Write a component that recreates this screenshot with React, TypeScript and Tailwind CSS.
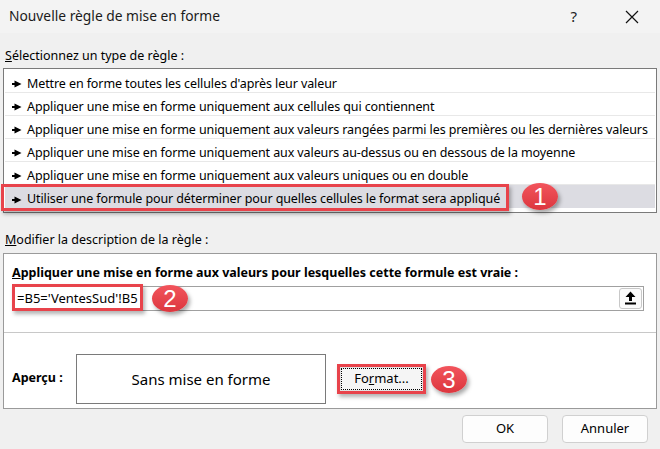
import React from "react";

const font = { fontFamily: '"Noto Sans", "Open Sans", Arial, sans-serif' };

function Pointer() {
  return (
    <svg width="10" height="8" viewBox="0 0 10 8" className="shrink-0">
      <rect x="0" y="3" width="4" height="2" fill="#000" />
      <polygon points="2.5,0.5 9.5,4 2.5,7.5" fill="#000" />
    </svg>
  );
}

function Badge({ n, className }: { n: string; className: string }) {
  return (
    <div
      className={`absolute w-[36px] h-[27px] rounded-[50%] bg-gradient-to-b from-[#f2545c] to-[#dc363e] shadow-[2px_3px_4px_rgba(0,0,0,0.35)] flex items-center justify-center text-white text-[24px] leading-none ${className}`}
      style={{ fontFamily: '"Liberation Sans", Arial, sans-serif' }}
    >
      {n}
    </div>
  );
}

const rules = [
  "Mettre en forme toutes les cellules d'après leur valeur",
  "Appliquer une mise en forme uniquement aux cellules qui contiennent",
  "Appliquer une mise en forme uniquement aux valeurs rangées parmi les premières ou les dernières valeurs",
  "Appliquer une mise en forme uniquement aux valeurs au-dessus ou en dessous de la moyenne",
  "Appliquer une mise en forme uniquement aux valeurs uniques ou en double",
  "Utiliser une formule pour déterminer pour quelles cellules le format sera appliqué",
];

export default function App() {
  return (
    <div className="w-[660px] h-[449px] bg-[#f0f0f0] text-[#000] overflow-hidden relative" style={font}>
      {/* title bar */}
      <div className="h-[33px] bg-[#f3f3f3] flex items-center pl-[9px]">
        <span className="text-[13.8px] text-[#1a1a1a]">Nouvelle règle de mise en forme</span>
        <span className="ml-auto text-[15px] text-[#222] mr-[48px]">?</span>
        <svg width="14" height="14" viewBox="0 0 14 14" className="mr-[21px]">
          <path d="M1 1 L13 13 M13 1 L1 13" stroke="#111" strokeWidth="1.2" />
        </svg>
      </div>

      <div className="px-[3px]">
        <div className="h-[35px] flex items-end pb-[2px] pl-[2px] text-[12.5px]">
          <span>
            <span className="underline">S</span>électionnez un type de règle :
          </span>
        </div>

        {/* rule type list */}
        <div className="relative h-[145px] border border-[#7a7a7a] bg-white pt-[1px] px-[1px]">
          {rules.map((r, i) => {
            const sel = i === rules.length - 1;
            return (
              <div
                key={i}
                className={`h-[23px] pt-[6px] flex items-center gap-[5px] pl-[7px] whitespace-nowrap overflow-hidden text-[12.5px] tracking-[-0.1px] ${
                  sel ? "bg-[#dcdce2]" : "border-b border-[#e8e8e8]"
                }`}
              >
                <Pointer />
                <span>{r}</span>
              </div>
            );
          })}
          <div className="absolute left-[-3px] top-[115px] w-[508px] h-[27px] border-[3px] border-[#e8434b] shadow-[2px_3px_4px_rgba(0,0,0,0.3)]" />
          <Badge n="1" className="left-[518px] top-[114px]" />
        </div>

        <div className="h-[40px] flex items-end pb-[3px] pl-[2px] text-[12.5px]">
          <span>
            <span className="underline">M</span>odifier la description de la règle :
          </span>
        </div>

        {/* rule description */}
        <div className="relative h-[156px] border border-[#9a9a9a] bg-white">
          <div className="pl-[8px] pt-[10px] text-[12.5px] font-bold">
            <span className="underline">A</span>ppliquer une mise en forme aux valeurs pour lesquelles cette formule est vraie :
          </div>
          <div className="mt-[3px] ml-[8px] mr-[12px] h-[25px] border border-[#a0a0a0] flex items-center pl-[4px]">
            <span className="text-[13px]">=B5='VentesSud'!B5</span>
            <div className="ml-auto mr-[1px] w-[23px] h-[21px] border border-[#c8c8c8] rounded-[3px] flex items-center justify-center bg-[#fbfbfb]">
              <svg width="11" height="14" viewBox="0 0 11 14">
                <polygon points="5.5,0.5 10.5,6 7,6 7,10 4,10 4,6 0.5,6" fill="#000" />
                <rect x="0" y="11.5" width="11" height="2" fill="#000" />
              </svg>
            </div>
          </div>
          <div className="absolute left-[8px] top-[30px] w-[131px] h-[27px] border-[3px] border-[#e8434b] shadow-[2px_3px_4px_rgba(0,0,0,0.3)]" />
          <Badge n="2" className="left-[148px] top-[31px]" />

          <div className="mt-[21px] border-t border-[#c8c8c8]" />

          <div className="flex items-center mt-[21px] pl-[8px]">
            <span className="w-[64px] text-[12.5px] font-bold">Aperçu :</span>
            <div className="w-[250px] h-[50px] border border-[#7a7a7a] flex items-center justify-center text-[15px]">
              Sans mise en forme
            </div>
            <div className="ml-[11px] w-[89px] h-[30px] border-[3px] border-[#e8434b] shadow-[2px_3px_4px_rgba(0,0,0,0.3)] bg-[#e1e1e1] p-[1px]">
              <div className="w-full h-full border border-dotted border-[#000] bg-[#f5f5f5] flex items-center justify-center text-[13px]">
                <span>
                  Fo<span className="underline">r</span>mat...
                </span>
              </div>
            </div>
            <Badge n="3" className="left-[427px] top-[112px]" />
          </div>
        </div>

        {/* dialog buttons */}
        <div className="flex justify-end gap-[14px] mt-[6px] pr-[9px]">
          <button className="w-[86px] h-[28px] rounded-[4px] border border-[#d0d0d0] bg-[#fdfdfd] text-[13px]">OK</button>
          <button className="w-[86px] h-[28px] rounded-[4px] border border-[#d0d0d0] bg-[#fdfdfd] text-[13px]">Annuler</button>
        </div>
      </div>
    </div>
  );
}
